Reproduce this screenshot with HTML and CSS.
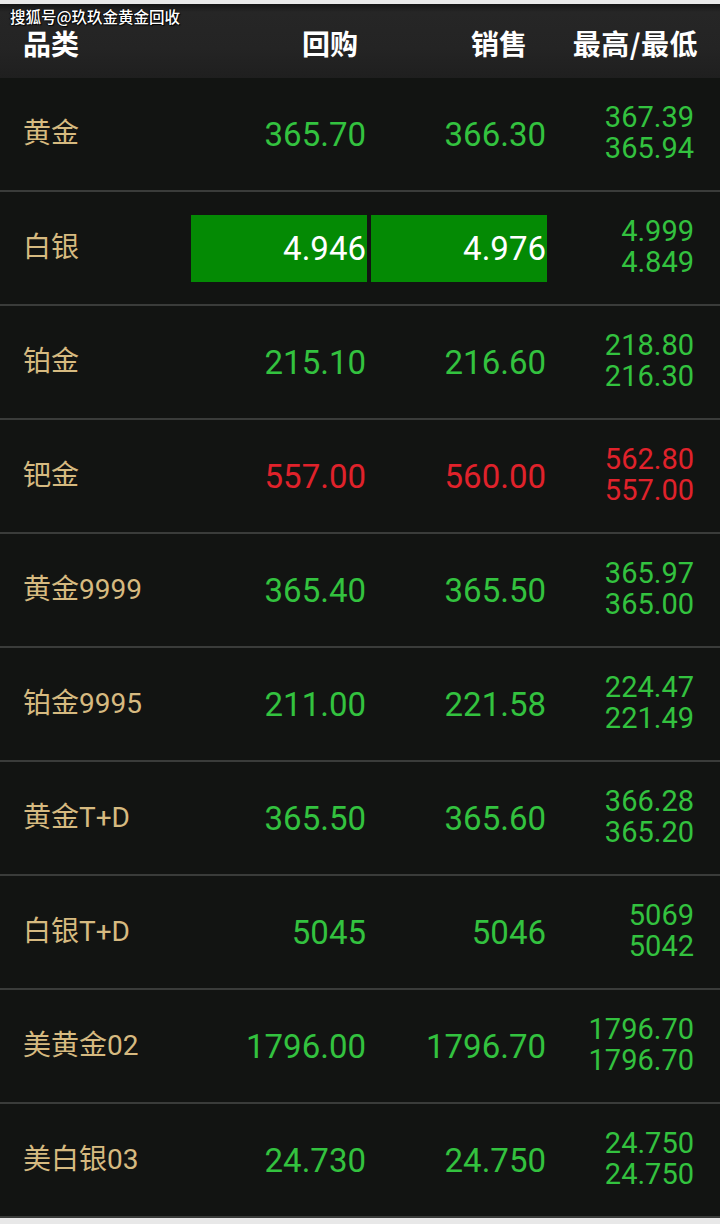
FILE: index.html
```html
<!DOCTYPE html>
<html lang="zh-CN">
<head>
    <meta charset="UTF-8">
    <meta name="viewport" content="width=device-width, initial-scale=1.0">
    <title>金价行情</title>
    <link rel="stylesheet" href="styles.css">
</head>
<body>
    <div class="board">
        <div class="head">
            <div class="watermark">搜狐号@玖玖金黄金回收</div>
            <div class="h-name">品类</div>
            <div class="h-buy">回购</div>
            <div class="h-sell">销售</div>
            <div class="h-range">最高/最低</div>
        </div>

        <div class="row">
            <div class="name">黄金</div>
            <div class="price"><span>365.70</span></div>
            <div class="price sell"><span>366.30</span></div>
            <div class="range"><span>367.39</span><span>365.94</span></div>
        </div>
        <div class="row">
            <div class="name">白银</div>
            <div class="price"><span class="flash">4.946</span></div>
            <div class="price sell"><span class="flash">4.976</span></div>
            <div class="range"><span>4.999</span><span>4.849</span></div>
        </div>
        <div class="row">
            <div class="name">铂金</div>
            <div class="price"><span>215.10</span></div>
            <div class="price sell"><span>216.60</span></div>
            <div class="range"><span>218.80</span><span>216.30</span></div>
        </div>
        <div class="row down">
            <div class="name">钯金</div>
            <div class="price"><span>557.00</span></div>
            <div class="price sell"><span>560.00</span></div>
            <div class="range"><span>562.80</span><span>557.00</span></div>
        </div>
        <div class="row">
            <div class="name">黄金9999</div>
            <div class="price"><span>365.40</span></div>
            <div class="price sell"><span>365.50</span></div>
            <div class="range"><span>365.97</span><span>365.00</span></div>
        </div>
        <div class="row">
            <div class="name">铂金9995</div>
            <div class="price"><span>211.00</span></div>
            <div class="price sell"><span>221.58</span></div>
            <div class="range"><span>224.47</span><span>221.49</span></div>
        </div>
        <div class="row">
            <div class="name">黄金T+D</div>
            <div class="price"><span>365.50</span></div>
            <div class="price sell"><span>365.60</span></div>
            <div class="range"><span>366.28</span><span>365.20</span></div>
        </div>
        <div class="row">
            <div class="name">白银T+D</div>
            <div class="price"><span>5045</span></div>
            <div class="price sell"><span>5046</span></div>
            <div class="range"><span>5069</span><span>5042</span></div>
        </div>
        <div class="row">
            <div class="name">美黄金02</div>
            <div class="price"><span>1796.00</span></div>
            <div class="price sell"><span>1796.70</span></div>
            <div class="range"><span>1796.70</span><span>1796.70</span></div>
        </div>
        <div class="row">
            <div class="name">美白银03</div>
            <div class="price"><span>24.730</span></div>
            <div class="price sell"><span>24.750</span></div>
            <div class="range"><span>24.750</span><span>24.750</span></div>
        </div>
    </div>
</body>
</html>
```

FILE: styles.css
```css
body {
    margin: 0;
    background-color: #e8e8e8;
    font-family: Roboto, "Noto Sans CJK SC", sans-serif;
}
.board {
    margin-top: 4px;
    background-color: #121412;
}
.head,
.row {
    display: grid;
    grid-template-columns: 191px 176px 180px 1fr;
}
.head {
    position: relative;
    height: 74px;
    align-items: center;
    background: linear-gradient(#141414 0, #262626 8px, #242424 60%, #1f1f1f 100%);
    color: #fff;
    font-family: "Noto Sans CJK SC", sans-serif;
    font-size: 28px;
    line-height: 26px;
    font-weight: bold;
}
.head > div {
    padding-top: 4px;
}
.watermark {
    position: absolute;
    left: 10px;
    top: 3px;
    font-size: 15.5px;
    line-height: 18px;
    font-weight: 500;
    color: #fff;
    text-shadow: 1px 1px 1px #000, -1px 0 1px #000;
}
.head > .watermark {
    padding-top: 0;
}
.h-name {
    padding-left: 23px;
}
.h-buy {
    text-align: right;
    padding-right: 9px;
}
.h-sell {
    text-align: right;
    padding-right: 20px;
}
.h-range {
    text-align: right;
    padding-right: 22px;
    letter-spacing: 0.5px;
}
.row {
    height: 112px;
    border-bottom: 2px solid #3a3c3a;
    align-items: center;
    color: #33c23f;
}
.row.down {
    color: #e0222b;
}
.name {
    padding-left: 23px;
    padding-bottom: 6px;
    color: #d6ba80;
    font-size: 28px;
}
.price {
    font-size: 33px;
}
.price.sell {
    padding-left: 4px;
}
.price span {
    display: block;
    height: 67px;
    line-height: 67px;
    text-align: right;
    padding-right: 1px;
}
.price .flash {
    background-color: #048a04;
    color: #fff;
}
.range {
    display: flex;
    flex-direction: column;
    align-items: flex-end;
    padding-right: 26px;
    padding-bottom: 3px;
    font-size: 29px;
    line-height: 31px;
}
```
